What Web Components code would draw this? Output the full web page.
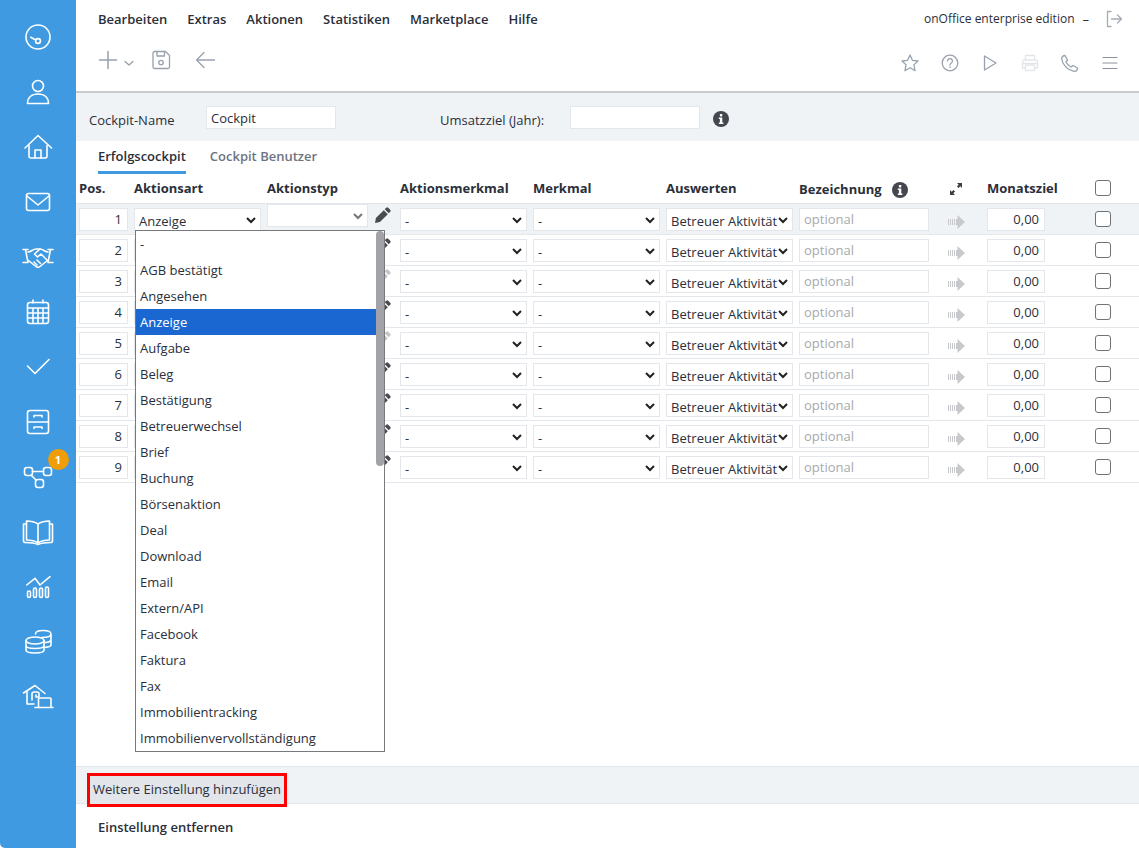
<!DOCTYPE html>
<html lang="de">
<head>
<meta charset="utf-8">
<title>Cockpit</title>
<style>
  html, body { margin: 0; padding: 0; background: #fff; }
  body { font: 13px "Open Sans", "Liberation Sans", sans-serif; color: #2a2f3a; }
</style>
</head>
<body>
<ck-app></ck-app>

<script>
// icon paths, drawn in a 32 box for the sidebar and a 20 box for the toolbar
const ICONS = {
  gauge: '<circle cx="16" cy="16" r="12"/><circle cx="16" cy="20" r="2.4"/><path d="M8.7 16.3 13.8 19"/>',
  person: '<circle cx="16" cy="10" r="5.5"/><path d="M5.5 27.5h21c0-6-4-9.5-10.5-9.5S5.500 21.500 5.500 27.500z"/>',
  home: '<path d="M3 17 16 4.500 29.500 17"/><path d="M7 14.500V25a2 2 0 0 0 2 2h14a2 2 0 0 0 2-2V14.500"/><path d="M13 27v-8h6v8"/>',
  mail: '<rect x="4.500" y="7.500" width="23" height="17" rx="2"/><path d="M5 10l11 9 11-9"/>',
  deal: '<path d="M1 8.500h5M3.500 8.500 6 21.500M1 21.500h4M31 8.500h-5M28.500 8.500 26 21.500M31 21.500h-4"/><path d="M6 11c3 0 5-3 8-3h4c3 0 5 3 8 3"/><path d="M6.500 19.500l7.500 6c1.500 1 3 1 4 0l7.500-6"/><path d="M18 8l-5.500 5 3 3 3.500-3 6.500 6.500M12 21l3 3M15 19l3.500 3.500"/>',
  calendar: '<rect x="5.500" y="6.500" width="21" height="21" rx="2.500"/><path d="M11 4v3M21 4v3M5.500 12h21M5.500 17h21M5.500 22h21M11 12v15M16 12v15M21 12v15"/>',
  check: '<path d="M5.500 15 13 22.500 27 8.500"/>',
  cabinet: '<rect x="5.500" y="4.500" width="21" height="23" rx="2.500"/><path d="M5.500 16h21M12 11V9.500h8V11M12 22.500V21h8v1.500"/>',
  network: '<rect x="2.500" y="6.500" width="8" height="8" rx="2.500"/><rect x="21.500" y="6.500" width="8" height="8" rx="2.500"/><rect x="13.500" y="18.500" width="8" height="8" rx="2.500"/><path d="M10.500 10.500h11M9.500 14.500 14 19"/>',
  book: '<path d="M16 8C13 6 8 5 4.500 5v19c3.500 0 8.500 1 11.500 3 3-2 8-3 11.500-3V5C24 5 19 6 16 8zM16 8v19"/><path d="M4.500 8H1.500v17c0 1 1 1.500 2 1.500 4 0 9 .5 12.500 2 3.500-1.500 8.500-2 12.500-2 1 0 2-.5 2-1.500V8h-3"/>',
  chart: '<path d="M4.700 14 13 7.300 18 14 28 5.700"/><rect x="5.500" y="20" width="3" height="6.500" rx="1.500"/><rect x="11.500" y="17" width="3" height="9.500" rx="1.500"/><rect x="17.500" y="17" width="3" height="9.500" rx="1.500"/><rect x="23.500" y="16" width="3" height="10.500" rx="1.500"/>',
  coins: '<ellipse cx="13" cy="14.500" rx="9" ry="3.500"/><path d="M4 14.500V24c0 2 4 3 9 3s9-1 9-3v-9.500M4 19.500c0 2 4 3 9 3s9-1 9-3"/><path d="M13.500 8c0-2.500 3-3.500 7.500-3.500s8 1 8 3.500v11c0 1-2 2-6 2.400M20 11.500c4.500 0 9-1 9-3.500M23 16.500c3.500-.2 6-1.200 6-3"/>',
  estate: '<path d="M1.500 12 13 4.500 23 12.500"/><path d="M5 10.500V23h7"/><path d="M10 19v-6a2 2 0 0 1 2-2h3a2 2 0 0 1 2 2v3h-3v-2"/><path d="M16.500 26v-8a1 1 0 0 1 1-1H28a1 1 0 0 1 1 1v8M13 26.500h18"/>',
  plus: '<path d="M10 1.500v17M1.500 10h17"/>',
  chevron: '<path d="M6 8.500l4 3.500 4-3.500"/>',
  save: '<path d="M3.500 1.500h11l4 4V17a1.500 1.500 0 0 1-1.500 1.500H3.500A1.500 1.500 0 0 1 2 17V3a1.500 1.500 0 0 1 1.500-1.500z"/><path d="M6 1.500V6h7.500V1.500"/><circle cx="10" cy="12.500" r="2.200"/>',
  back: '<path d="M19.500 10H1.500M9 2.500 1.500 10 9 17.500"/>',
  star: '<path d="M10 2l2.400 5.300 5.600.7-4.100 3.900 1.100 5.800-5-2.900-5 2.900 1.100-5.800L2 8l5.600-.7z"/>',
  help: '<circle cx="10" cy="10" r="7.800"/><path d="M7.600 8a2.400 2.400 0 1 1 3.700 2c-.9.600-1.300 1-1.300 2"/><path d="M10 14v.6"/>',
  play: '<path d="M4.500 3v14L16 10z"/>',
  print: '<path d="M5.500 7V2.500h9V7M5.500 15H2.500V9a2 2 0 0 1 2-2h11a2 2 0 0 1 2 2v6h-3"/><rect x="5.500" y="12" width="9" height="5.500"/><path d="M3 10.500h14"/>',
  phone: '<path d="M5 2.500 7.500 7 6 9c1 2 3 4 5 5l2-1.500 4.500 2.500c.3 2-1.500 3.500-3.500 3.300C8 17.500 2.500 12 1.700 6 1.500 4 3 2.500 5 2.500z"/>',
  menu: '<path d="M3 4.500h14M3 10h14M3 15.500h14"/>',
  logout: '<path d="M7 2.500H3.500v15H7"/><path d="M7.500 10h10M13.500 6l4 4-4 4"/>'
};

class CkIcon extends HTMLElement {
  connectedCallback() {
    const size = this.getAttribute('size') || 20;
    const box = this.getAttribute('box') || size;
    const color = this.getAttribute('color') || '#fff';
    const width = this.getAttribute('stroke') || 1.7;
    this.attachShadow({ mode: 'open' });
    this.shadowRoot.innerHTML = `
      <style>:host { display: block; width: ${size}px; height: ${size}px; } svg { display: block; }</style>
      <svg width="${size}" height="${size}" viewBox="0 0 ${box} ${box}" fill="none" stroke="${color}"
           stroke-width="${width}" stroke-linecap="round" stroke-linejoin="round">${ICONS[this.getAttribute('name')]}</svg>`;
  }
}
customElements.define('ck-icon', CkIcon);

class CkNavItem extends HTMLElement {
  connectedCallback() {
    const badge = this.getAttribute('badge');
    this.attachShadow({ mode: 'open' });
    this.shadowRoot.innerHTML = `
      <style>
        :host { display: flex; height: 55px; align-items: center; justify-content: center; position: relative; }
        .badge {
          position: absolute; left: 47.500px; top: -.5px; width: 21px; height: 21px; border-radius: 50%;
          background: #f09d0a; color: #fff; font-size: 11px; font-weight: 700; line-height: 21px; text-align: center;
        }
      </style>
      <ck-icon name="${this.getAttribute('name')}" size="32" box="32" stroke="1.600"></ck-icon>
      ${badge ? `<span class="badge">${badge}</span>` : ''}`;
  }
}
customElements.define('ck-nav-item', CkNavItem);

class CkSidebar extends HTMLElement {
  constructor() {
    super();
    this.attachShadow({ mode: 'open' });
    const items = ['gauge', 'person', 'home', 'mail', 'deal', 'calendar', 'check', 'cabinet', 'network', 'book', 'chart', 'coins', 'estate'];
    this.shadowRoot.innerHTML = `
      <style>
        :host { display: block; background: #3f9ae2; padding-top: 9.500px; border-bottom-left-radius: 5px; }
      </style>
      ${items.map(n => `<ck-nav-item name="${n}" ${n === 'network' ? 'badge="1"' : ''}></ck-nav-item>`).join('')}`;
  }
}
customElements.define('ck-sidebar', CkSidebar);

class CkTopbar extends HTMLElement {
  constructor() {
    super();
    this.attachShadow({ mode: 'open' });
    const menu = ['Bearbeiten', 'Extras', 'Aktionen', 'Statistiken', 'Marketplace', 'Hilfe'];
    const gray = '#98a1ad';
    this.shadowRoot.innerHTML = `
      <style>
        :host { display: block; height: 93px; box-sizing: border-box; border-bottom: 2px solid #c9cbce; background: #fff; }
        .top { display: flex; height: 37px; align-items: center; padding: 0 15px 0 22px; }
        .menu { display: flex; gap: 20px; font-weight: 600; flex: 1; }
        .edition { font-size: 12px; }
        .dash { margin: 0 15px 0 8px; }
        .tools { display: flex; justify-content: space-between; align-items: center; padding: 0 19px 0 22px; height: 46px; }
        .group { display: flex; align-items: center; }
        .right { gap: 20px; padding-top: 6px; }
      </style>
      <div class="top">
        <div class="menu">${menu.map(m => `<span>${m}</span>`).join('')}</div>
        <span class="edition">onOffice enterprise edition</span>
        <span class="dash">–</span>
        <ck-icon name="logout" color="#a3abb5" stroke="1.300"></ck-icon>
      </div>
      <div class="tools">
        <div class="group">
          <ck-icon name="plus" color="${gray}" stroke="1.500"></ck-icon>
          <ck-icon name="chevron" color="${gray}" stroke="1.300" style="margin:6px 12px 0 1px"></ck-icon>
          <ck-icon name="save" color="${gray}" stroke="1.300" style="margin-right:24px"></ck-icon>
          <ck-icon name="back" color="${gray}" stroke="1.300"></ck-icon>
        </div>
        <div class="group right">
          <ck-icon name="star" color="${gray}" stroke="1.300"></ck-icon>
          <ck-icon name="help" color="${gray}" stroke="1.300"></ck-icon>
          <ck-icon name="play" color="${gray}" stroke="1.300"></ck-icon>
          <ck-icon name="print" color="#e2e6ea" stroke="1.300"></ck-icon>
          <ck-icon name="phone" color="${gray}" stroke="1.300"></ck-icon>
          <ck-icon name="menu" color="#8b929c" stroke="1.200"></ck-icon>
        </div>
      </div>`;
  }
}
customElements.define('ck-topbar', CkTopbar);

class CkField extends HTMLElement {
  constructor() {
    super();
    this.attachShadow({ mode: 'open' });
    this.shadowRoot.innerHTML = `
      <style>
        :host {
          display: block; box-sizing: border-box; height: 23px; background: #fff; border: 1px solid #e3e6ea;
          padding: 0 4px; line-height: 20px; font-size: 13px; white-space: nowrap; overflow: hidden;
        }
        :host([align=right]) { text-align: right; padding-right: 5px; }
        :host([placeholder]) { color: #a6a9ae; }
      </style>
      <slot></slot>`;
  }
}
customElements.define('ck-field', CkField);

class CkSelect extends HTMLElement {
  constructor() {
    super();
    this.attachShadow({ mode: 'open' });
    this.shadowRoot.innerHTML = `
      <style>
        :host {
          display: block; position: relative; box-sizing: border-box; height: 23px; background: #fff;
          border: 1px solid #e3e6ea; padding: 2px 0 0 4px; line-height: 20px; font-size: 13px; overflow: hidden; white-space: nowrap;
        }
        svg { position: absolute; right: 4px; top: 8px; }
        :host([muted]) svg { stroke: #777; }
      </style>
      <slot></slot>
      <svg width="10" height="7" viewBox="0 0 10 7" fill="none" stroke="#222" stroke-width="2"><path d="M1 1l4 4 4-4"/></svg>`;
  }
}
customElements.define('ck-select', CkSelect);

class CkPencil extends HTMLElement {
  constructor() {
    super();
    this.attachShadow({ mode: 'open' });
    this.shadowRoot.innerHTML = `
      <style>
        :host { display: block; width: 16px; height: 16px; color: #4a4b50; }
        :host([faded]) { color: #c4c5c8; }
        svg { display: block; }
      </style>
      <svg width="16" height="16" viewBox="0 0 16 16" fill="currentColor">
        <path d="M11.200.8a1.400 1.400 0 0 1 2 0l2 2a1.400 1.400 0 0 1 0 2l-1.500 1.500-4-4zM8.800 3.200l4 4-7.900 7.900L0 16l.9-4.900zM2 11.700l.8-.8 2.300 2.300-.8.800-2.900.6z"/>
      </svg>`;
  }
}
customElements.define('ck-pencil', CkPencil);

class CkCheckbox extends HTMLElement {
  constructor() {
    super();
    this.attachShadow({ mode: 'open' });
    this.shadowRoot.innerHTML = `
      <style>
        :host { display: block; box-sizing: border-box; width: 16px; height: 16px; border: 1px solid #6f7378; border-radius: 3px; background: #fff; }
      </style>`;
  }
}
customElements.define('ck-checkbox', CkCheckbox);

class CkInfo extends HTMLElement {
  constructor() {
    super();
    this.attachShadow({ mode: 'open' });
    this.shadowRoot.innerHTML = `
      <style>:host { display: inline-block; width: 16px; height: 16px; } svg { display: block; }</style>
      <svg width="16" height="16" viewBox="0 0 16 16">
        <circle cx="8" cy="8" r="8" fill="#45474f"/>
        <rect x="6.900" y="3" width="2.400" height="2.400" rx=".6" fill="#fff"/>
        <path d="M5.800 6.600h3.500v5h1.100v1.500H5.800v-1.500h1.100V8.100H5.800z" fill="#fff"/>
      </svg>`;
  }
}
customElements.define('ck-info', CkInfo);

class CkCockpitForm extends HTMLElement {
  constructor() {
    super();
    this.attachShadow({ mode: 'open' });
    this.shadowRoot.innerHTML = `
      <style>
        :host { display: flex; align-items: flex-start; height: 48px; box-sizing: border-box; padding: 13px 0 0 13px; background: #f0f3f6; }
        label { line-height: 28px; }
        .name { width: 117px; }
        .goal { width: 130px; margin-left: 104px; }
        ck-field { width: 130px; line-height: 22px; }
        ck-info { margin: 5px 0 0 13px; }
      </style>
      <label class="name">Cockpit-Name</label>
      <ck-field>Cockpit</ck-field>
      <label class="goal">Umsatzziel (Jahr):</label>
      <ck-field></ck-field>
      <ck-info></ck-info>`;
  }
}
customElements.define('ck-cockpit-form', CkCockpitForm);

class CkTabs extends HTMLElement {
  constructor() {
    super();
    this.attachShadow({ mode: 'open' });
    this.shadowRoot.innerHTML = `
      <style>
        :host { display: flex; gap: 24px; height: 33px; box-sizing: border-box; padding-left: 22px; font-weight: 600; }
        span { line-height: 30px; color: #6d7480; }
        .on { color: #2a2f3a; height: 33px; box-sizing: border-box; border-bottom: 3px solid #3f9ae2; }
      </style>
      <span class="on">Erfolgscockpit</span>
      <span>Cockpit Benutzer</span>`;
  }
}
customElements.define('ck-tabs', CkTabs);

const COLUMNS = '49px 127px 127px 127px 127px 127px 130px 46px 58px 1fr';

class CkHeaderRow extends HTMLElement {
  constructor() {
    super();
    this.attachShadow({ mode: 'open' });
    this.shadowRoot.innerHTML = `
      <style>
        :host {
          display: grid; grid-template-columns: ${COLUMNS}; grid-template-rows: 28px; column-gap: 6px; height: 30px; box-sizing: border-box;
          padding: 0 0 1px 3px; align-items: center; border-bottom: 1px solid #e3e6ea; font-weight: 700; line-height: 28px;
        }
        .with-info { display: flex; align-items: center; gap: 10px; padding-top: 2px; }
        .with-info ck-info { margin-top: 2px; }
        .expand { display: block; margin: 2px 0 0 15px; }
        ck-checkbox { margin-left: 44px; }
      </style>
      <span>Pos.</span><span>Aktionsart</span><span>Aktionstyp</span><span>Aktionsmerkmal</span>
      <span>Merkmal</span><span>Auswerten</span>
      <span class="with-info">Bezeichnung <ck-info></ck-info></span>
      <svg class="expand" width="12" height="12" viewBox="0 0 12 12" fill="#3c3e44">
        <path d="M7 0h5v5l-1.700-1.700-1.800 1.800-1.600-1.600 1.800-1.800zM5 12H0V7l1.700 1.700 1.800-1.800 1.600 1.600-1.800 1.800z"/>
      </svg>
      <span>Monatsziel</span>
      <ck-checkbox></ck-checkbox>`;
  }
}
customElements.define('ck-header-row', CkHeaderRow);

class CkRow extends HTMLElement {
  connectedCallback() {
    const pos = this.getAttribute('pos');
    const chosen = this.getAttribute('chosen') || '';
    this.attachShadow({ mode: 'open' });
    this.shadowRoot.innerHTML = `
      <style>
        :host {
          display: grid; grid-template-columns: ${COLUMNS}; column-gap: 6px; height: 31px; box-sizing: border-box;
          padding: 4px 0 0 3px; align-items: start; border-bottom: 1px solid #e3e6ea;
        }
        :host([active]) { background: #f0f3f6; }
        .typ { display: flex; margin-top: -4px; gap: 7px; }
        .typ ck-select { width: 101px; }
        .typ ck-pencil { margin-top: 3px; }
        .arrow { display: block; margin: 7px 0 0 13px; }
        ck-checkbox { margin: 3px 0 0 44px; }
      </style>
      <ck-field align="right">${pos}</ck-field>
      <ck-select>${chosen}</ck-select>
      <div class="typ"><ck-select muted></ck-select><ck-pencil ${this.hasAttribute('faded') ? 'faded' : ''}></ck-pencil></div>
      <ck-select>-</ck-select>
      <ck-select>-</ck-select>
      <ck-select>Betreuer Aktivität</ck-select>
      <ck-field placeholder>optional</ck-field>
      <svg class="arrow" width="17" height="14" viewBox="0 0 17 14" fill="#c8c9cc">
        <path d="M0 4h1v6H0zM2 4h1v6H2zM4 4h1v6H4zM6 4h1v6H6zM8 4h1.500V0L17 7l-7.500 7v-4H8z"/>
      </svg>
      <ck-field align="right">0,00</ck-field>
      <ck-checkbox></ck-checkbox>`;
  }
}
customElements.define('ck-row', CkRow);

class CkDropdown extends HTMLElement {
  constructor() {
    super();
    this.attachShadow({ mode: 'open' });
    const options = ['-', 'AGB bestätigt', 'Angesehen', 'Anzeige', 'Aufgabe', 'Beleg', 'Bestätigung', 'Betreuerwechsel',
      'Brief', 'Buchung', 'Börsenaktion', 'Deal', 'Download', 'Email', 'Extern/API', 'Facebook', 'Faktura', 'Fax',
      'Immobilientracking', 'Immobilienvervollständigung'];
    this.shadowRoot.innerHTML = `
      <style>
        :host {
          position: absolute; left: 59px; top: 56px; width: 250px; height: 522px; box-sizing: border-box;
          border: 1px solid #77797c; background: #fff; overflow: hidden; z-index: 2;
        }
        .item { height: 26px; line-height: 26px; padding-left: 4px; margin-right: 8px; white-space: nowrap; }
        .item.sel { background: #1a67d2; color: #fff; }
        .thumb { position: absolute; right: 0; top: 0; width: 8px; height: 235px; background: #a2a3a8; border-radius: 4px; }
      </style>
      ${options.map(o => `<div class="item ${o === 'Anzeige' ? 'sel' : ''}">${o}</div>`).join('')}
      <div class="thumb"></div>`;
  }
}
customElements.define('ck-dropdown', CkDropdown);

class CkTable extends HTMLElement {
  constructor() {
    super();
    this.attachShadow({ mode: 'open' });
    const rows = [];
    for (let i = 1; i <= 9; i++) {
      rows.push(`<ck-row pos="${i}" ${i === 1 ? 'active chosen="Anzeige"' : ''} ${i === 3 || i === 5 ? 'faded' : ''}></ck-row>`);
    }
    this.shadowRoot.innerHTML = `
      <style>:host { display: block; position: relative; }</style>
      <ck-header-row></ck-header-row>
      ${rows.join('')}
      <ck-dropdown></ck-dropdown>`;
  }
}
customElements.define('ck-table', CkTable);

class CkFooter extends HTMLElement {
  constructor() {
    super();
    this.attachShadow({ mode: 'open' });
    this.shadowRoot.innerHTML = `
      <style>
        :host { display: block; }
        .band { height: 38px; box-sizing: border-box; background: #f0f3f6; border-top: 1px solid #e3e6ea; border-bottom: 1px solid #e3e6ea; padding: 9px 0 0 14px; }
        .add { display: block; width: 194px; height: 28px; line-height: 27px; background: #e2e5ea; outline: 3px solid #f00; padding-left: 3px; box-sizing: border-box; position: relative; }
        .remove { padding-left: 22px; height: 44px; line-height: 47px; font-weight: 600; }
      </style>
      <div class="band"><span class="add">Weitere Einstellung hinzufügen</span></div>
      <div class="remove">Einstellung entfernen</div>`;
  }
}
customElements.define('ck-footer', CkFooter);

class CkApp extends HTMLElement {
  constructor() {
    super();
    this.attachShadow({ mode: 'open' });
    this.shadowRoot.innerHTML = `
      <style>
        :host { display: grid; grid-template-columns: 76px 1fr; height: 848px; overflow: hidden; background: #fff; }
        main { display: flex; flex-direction: column; min-width: 0; }
        ck-table { flex: 1; }
      </style>
      <ck-sidebar></ck-sidebar>
      <main>
        <ck-topbar></ck-topbar>
        <ck-cockpit-form></ck-cockpit-form>
        <ck-tabs></ck-tabs>
        <ck-table></ck-table>
        <ck-footer></ck-footer>
      </main>`;
  }
}
customElements.define('ck-app', CkApp);
</script>
</body>
</html>
